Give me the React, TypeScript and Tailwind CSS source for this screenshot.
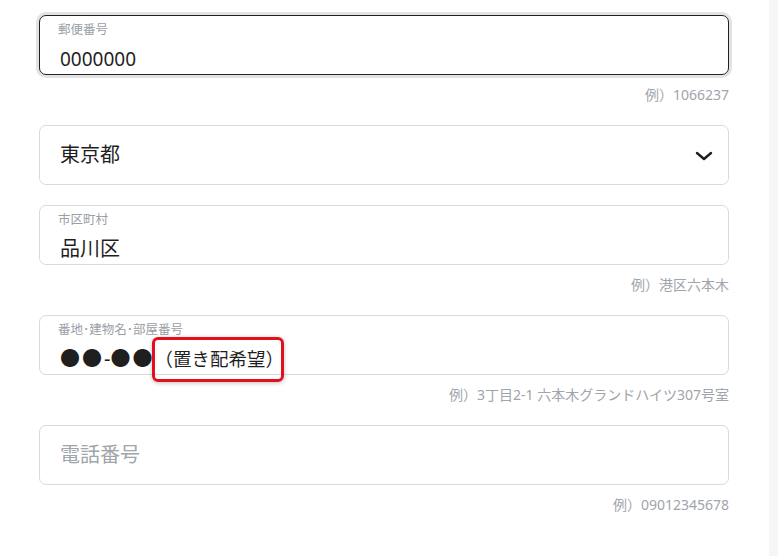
import React from "react";

const font = { fontFamily: '"Noto Sans", "Noto Sans CJK JP", sans-serif' };

function Hint({ children }: { children: React.ReactNode }) {
  return (
    <div className="mt-[10px] h-5 text-right text-[14px] leading-5 text-[#a0a4ab]">{children}</div>
  );
}

function Labeled({
  label,
  children,
  focused,
}: {
  label: string;
  children: React.ReactNode;
  focused?: boolean;
}) {
  return (
    <div
      className={
        focused
          ? "h-[60px] rounded-[7px] border border-[#222] bg-white px-[18px] shadow-[0_0_0_3px_#e3e3e3]"
          : "h-[60px] rounded-[7px] border border-[#d9dadd] bg-white px-[18px]"
      }
    >
      <div className="pt-[5px] text-[12.5px] leading-[18px] text-[#9a9ea5]">{label}</div>
      <div className="mt-[6px] pl-[2px] text-[20px] leading-[28px] text-[#1f1f1f]">{children}</div>
    </div>
  );
}

export default function App() {
  return (
    <div className="flex h-[556px] w-[778px] bg-white" style={font}>
      <div className="flex-1 pl-[39px] pr-[40px] pt-[15px]">
        <div className="flex flex-col gap-5">
          <div>
            <Labeled label="郵便番号" focused>
              <span className="text-[19px]">0000000</span>
            </Labeled>
            <Hint>例）1066237</Hint>
          </div>
          <div className="flex h-[60px] items-center justify-between rounded-[7px] border border-[#d9dadd] bg-white pl-[20px] pr-[15px]">
            <span className="text-[20px] text-[#1f1f1f]">東京都</span>
            <svg width="18" height="10" viewBox="0 0 18 10" className="mt-[2px]">
              <path d="M2 2 L9 8 L16 2" fill="none" stroke="#1f1f1f" strokeWidth="2.4" strokeLinecap="round" strokeLinejoin="round" />
            </svg>
          </div>
          <div>
            <Labeled label="市区町村">品川区</Labeled>
            <Hint>例）港区六本木</Hint>
          </div>
          <div>
            <Labeled label="番地･建物名･部屋番号">
              <span className="relative inline-flex items-center">
                <span className="tracking-[2px]">●●</span>
                <span>-</span>
                <span className="tracking-[2px]">●●</span>
                <span className="relative text-[18.5px]">
                  （置き配希望）
                  <span className="pointer-events-none absolute -left-[2px] right-0 -top-[8px] -bottom-[9px] rounded-[6px] border-[3px] border-[#e3101b] shadow-[0_1px_4px_rgba(0,0,0,0.25)]" />
                </span>
              </span>
            </Labeled>
            <Hint>例）3丁目2-1 六本木グランドハイツ307号室</Hint>
          </div>
          <div>
            <div className="flex h-[60px] items-center rounded-[7px] border border-[#d9dadd] bg-white px-[20px]">
              <span className="text-[20px] text-[#a0a4ab]">電話番号</span>
            </div>
            <Hint>例）09012345678</Hint>
          </div>
        </div>
      </div>
      <div className="w-[9px] bg-[#f6f6f8]" />
    </div>
  );
}
